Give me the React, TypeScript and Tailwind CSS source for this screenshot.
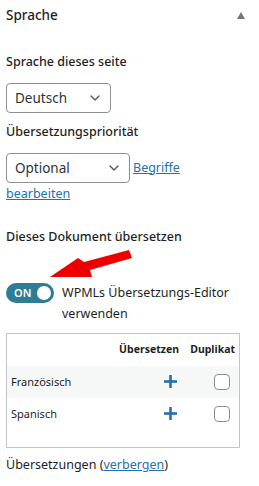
import { ChevronDown } from 'lucide-react'

function Select({ label, width }: { label: string; width: string }) {
  return (
    <div className={`flex h-[30px] ${width} items-center justify-between rounded-[4px] border border-[#8c8f94] bg-white pl-[8px] pr-[7px] text-[13.5px] text-[#2c3338]`}>
      <span>{label}</span>
      <ChevronDown size={16} strokeWidth={2} className="text-[#50575e]" />
    </div>
  )
}

function Plus() {
  return (
    <svg width="13" height="13" viewBox="0 0 13 13">
      <rect x="5.2" y="0" width="2.6" height="13" fill="#2271b1" />
      <rect x="0" y="5.2" width="13" height="2.6" fill="#2271b1" />
    </svg>
  )
}

function Check() {
  return <span className="block h-[16px] w-[16px] rounded-[4px] border border-[#8c8f94] bg-white" />
}

function Row({ name, shaded }: { name: string; shaded?: boolean }) {
  return (
    <div className={`flex h-[32px] items-center text-[11px] ${shaded ? 'bg-[#f6f7f7]' : ''}`}>
      <span className="flex-1 pl-[4px]">{name}</span>
      <span className="flex w-[62px] justify-end pr-[4px]"><Plus /></span>
      <span className="flex w-[58px] justify-end pr-[9px]"><Check /></span>
    </div>
  )
}

export default function App() {
  return (
    <div className="relative h-[486px] w-[259px] overflow-hidden bg-white font-['Noto_Sans',sans-serif] text-[#1e1e1e]">
      <div className="flex h-[30px] items-center justify-between pl-[6px] pr-[14px]">
        <span className="text-[13.5px] font-medium">Sprache</span>
        <span className="h-0 w-0 border-x-[4px] border-b-[7px] border-x-transparent border-b-[#757575]" />
      </div>

      <div className="w-[240px] pl-[6px]">
        <div className="mt-[23px] text-[12.5px] font-medium">Sprache dieses seite</div>
        <div className="mt-[11px]">
          <Select label="Deutsch" width="w-[105px]" />
        </div>

        <div className="mt-[10px] text-[12.5px] font-medium">Übersetzungspriorität</div>
        <div className="mt-[13px] text-[12.5px] leading-[26px]">
          <span className="-my-[2px] mr-[3px] inline-block align-middle">
            <Select label="Optional" width="w-[124px]" />
          </span>
          <a className="text-[#2271b1] underline">Begriffe</a>{' '}
          <a className="text-[#2271b1] underline">bearbeiten</a>
        </div>

        <div className="mt-[21px] text-[12.5px] font-medium">Dieses Dokument übersetzen</div>

        <div className="mt-[35px] flex items-start gap-[8px]">
          <div className="mt-[1px] flex h-[20px] w-[48px] shrink-0 items-center justify-between rounded-full bg-[#2e7d96] pl-[8px] pr-[3px]">
            <span className="text-[11px] font-semibold text-white">ON</span>
            <span className="h-[14px] w-[14px] rounded-full bg-white" />
          </div>
          <div className="text-[12.5px] leading-[21px] text-[#1e1e1e]">WPMLs Übersetzungs-Editor verwenden</div>
        </div>

        <div className="mt-[9px] w-[234px] border border-[#c3c4c7] pb-[17px]">
          <div className="flex h-[32px] items-center text-[10.5px] font-bold">
            <span className="flex-1" />
            <span className="w-[62px] pr-[2px] text-right">Übersetzen</span>
            <span className="w-[58px] pr-[4px] text-right">Duplikat</span>
          </div>
          <Row name="Französisch" shaded />
          <Row name="Spanisch" />
        </div>

        <div className="mt-[8px] text-[12.5px]">
          Übersetzungen (<a className="text-[#2271b1] underline">verbergen</a>)
        </div>
      </div>

      <svg className="absolute left-[44px] top-[246px]" width="92" height="36" viewBox="0 0 92 36">
        <polygon points="6,31 34,12 40,16 85,4 88,12 46,24 48,31" fill="#ee0000" />
      </svg>
    </div>
  )
}
